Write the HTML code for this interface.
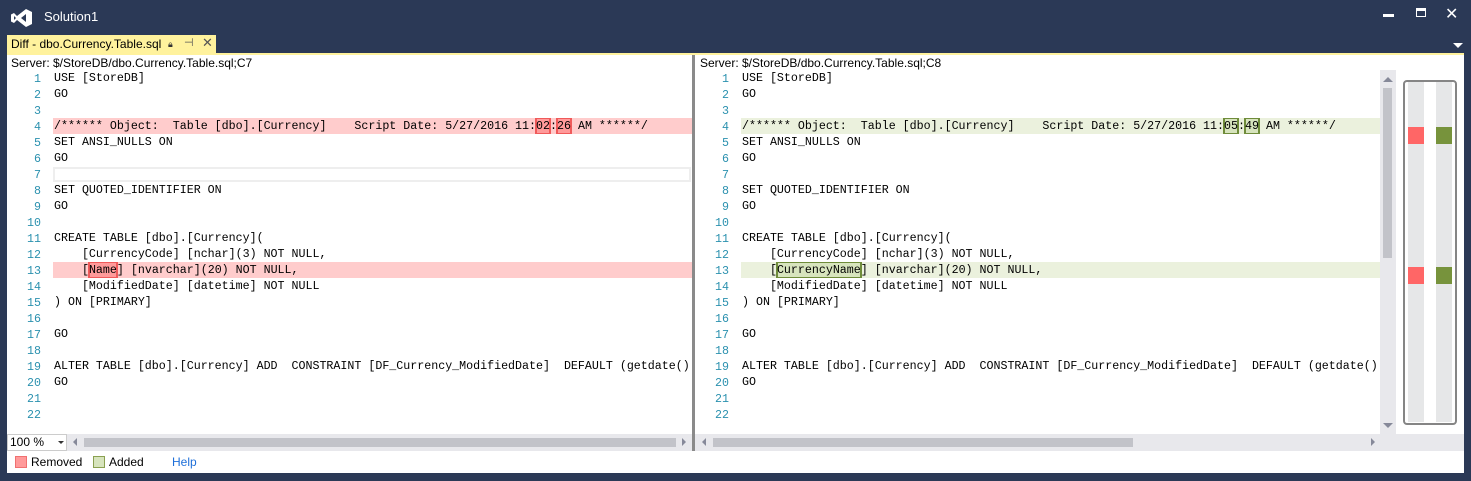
<!DOCTYPE html>
<html><head><meta charset="utf-8"><style>
*{margin:0;padding:0;box-sizing:border-box}
body{width:1471px;height:481px;background:#2b3956;position:relative;overflow:hidden;font-family:"Segoe UI","Liberation Sans",sans-serif}
.abs{position:absolute}
.code{font-family:"Liberation Mono",monospace;font-size:11.65px;color:#000;white-space:pre;line-height:16px}
.ln{position:absolute;width:36px;text-align:right;color:#2b91af;font-family:"Liberation Mono",monospace;font-size:11.65px;line-height:16px}
.rm{background:#ffcccc}
.ad{background:#ebf1dd}
.rb{display:inline-block;height:16px;vertical-align:top;box-shadow:0 0 0 1px #f05a5a,inset 0 0 0 1px #f05a5a;background:#ff9a9a}
.gb{display:inline-block;height:16px;vertical-align:top;box-shadow:0 0 0 1px #6f8c3a,inset 0 0 0 1px #6f8c3a;background:#d7e4bd}
.hdr{font-size:12px;color:#000}
</style></head><body>
<svg class="abs" style="left:11px;top:9px" width="22" height="18" viewBox="0 0 22 18"><path d="M15 0 L21 3 L21 15 L15 18 L6 11 L3 14 L0 12.5 L0 5.5 L3 4 L6 7 Z M15 5 L10 9 L15 13 Z M3 7 L3 11 L5 9 Z" fill="#fff" fill-rule="evenodd"/></svg>
<div class="abs" style="left:44px;top:9px;color:#fff;font-size:13px">Solution1</div>
<div class="abs" style="left:1383px;top:14px;width:11px;height:3px;background:#fff"></div>
<div class="abs" style="left:1416px;top:8px;width:10px;height:9px;border:1px solid #fff;border-top-width:3px"></div>
<div class="abs" style="left:1445px;top:4px;color:#fff;font-size:16px">✕</div>
<div class="abs" style="left:1453px;top:43px;width:0;height:0;border-left:5px solid transparent;border-right:5px solid transparent;border-top:5px solid #fff"></div>
<div class="abs" style="left:7px;top:35px;width:209px;height:19px;background:#fff29d"></div>
<div class="abs" style="left:11px;top:37px;font-size:12px;color:#000">Diff - dbo.Currency.Table.sql</div>
<div class="abs" style="left:168px;top:39px;font-size:9px;color:#333">🔒︎</div>
<div class="abs" style="left:184px;top:36px;font-size:11px;color:#555">⊣</div>
<div class="abs" style="left:202px;top:35px;font-size:13px;color:#555">✕</div>
<div class="abs" style="left:7px;top:53px;width:1457px;height:2px;background:#fff29d"></div>
<div class="abs" style="left:7px;top:55px;width:1457px;height:418px;background:#fff"></div>
<div class="abs hdr" style="left:11px;top:56px">Server: $/StoreDB/dbo.Currency.Table.sql;C7</div>
<div class="abs hdr" style="left:700px;top:56px">Server: $/StoreDB/dbo.Currency.Table.sql;C8</div>
<div class="abs" style="left:692px;top:55px;width:3px;height:396px;background:#8a8a8a"></div>
<div class="abs rm" style="left:53px;top:118px;width:639px;height:16px"></div>
<div class="abs" style="left:53px;top:167px;width:638px;height:15px;border:2px solid #eee"></div>
<div class="abs rm" style="left:53px;top:262px;width:639px;height:16px"></div>
<div class="abs ad" style="left:741px;top:118px;width:639px;height:16px"></div>
<div class="abs ad" style="left:741px;top:262px;width:639px;height:16px"></div>
<div id="L"></div><div id="R"></div>
<div class="abs" style="left:1380px;top:70px;width:16px;height:364px;background:#e8e8ec"></div>
<div class="abs" style="left:1383px;top:88px;width:9px;height:170px;background:#c2c3c9"></div>
<div class="abs" style="left:1383px;top:77px;border-left:5px solid transparent;border-right:5px solid transparent;border-bottom:5px solid #868999"></div>
<div class="abs" style="left:1383px;top:423px;border-left:5px solid transparent;border-right:5px solid transparent;border-top:5px solid #868999"></div>
<div class="abs" style="left:1408px;top:82px;width:16px;height:340px;background:#e6e7e8"></div>
<div class="abs" style="left:1436px;top:82px;width:16px;height:340px;background:#e6e7e8"></div>
<div class="abs" style="left:1408px;top:127px;width:16px;height:17px;background:#ff6666"></div>
<div class="abs" style="left:1436px;top:127px;width:16px;height:17px;background:#77933c"></div>
<div class="abs" style="left:1408px;top:267px;width:16px;height:17px;background:#ff6666"></div>
<div class="abs" style="left:1436px;top:267px;width:16px;height:17px;background:#77933c"></div>
<div class="abs" style="left:1403px;top:80px;width:54px;height:345px;border:2px solid #858585;border-radius:4px"></div>
<div class="abs" style="left:7px;top:434px;width:685px;height:17px;background:#e8e8ec"></div>
<div class="abs" style="left:695px;top:434px;width:769px;height:17px;background:#e8e8ec"></div>
<div class="abs" style="left:7px;top:434px;width:60px;height:17px;background:#fff;border:1px solid #ccc"></div>
<div class="abs" style="left:10px;top:435px;font-size:12px">100 %</div>
<div class="abs" style="left:58px;top:441px;border-left:3px solid transparent;border-right:3px solid transparent;border-top:3px solid #333"></div>
<div class="abs" style="left:73px;top:438px;border-top:4px solid transparent;border-bottom:4px solid transparent;border-right:4px solid #868999"></div>
<div class="abs" style="left:84px;top:438px;width:592px;height:9px;background:#c2c3c9"></div>
<div class="abs" style="left:682px;top:438px;border-top:4px solid transparent;border-bottom:4px solid transparent;border-left:4px solid #868999"></div>
<div class="abs" style="left:702px;top:438px;border-top:4px solid transparent;border-bottom:4px solid transparent;border-right:4px solid #868999"></div>
<div class="abs" style="left:713px;top:438px;width:420px;height:9px;background:#c2c3c9"></div>
<div class="abs" style="left:1371px;top:438px;border-top:4px solid transparent;border-bottom:4px solid transparent;border-left:4px solid #868999"></div>
<div class="abs" style="left:15px;top:456px;width:12px;height:12px;background:#ff9a9a;border:1px solid #f07070"></div>
<div class="abs" style="left:31px;top:455px;font-size:12px">Removed</div>
<div class="abs" style="left:93px;top:456px;width:12px;height:12px;background:#d7e4bd;border:1px solid #8aa050"></div>
<div class="abs" style="left:109px;top:455px;font-size:12px">Added</div>
<div class="abs" style="left:172px;top:455px;font-size:12px;color:#1e6fd9">Help</div>
<script>
var L=["USE [StoreDB]","GO","",'/****** Object:  Table [dbo].[Currency]    Script Date: 5/27/2016 11:<b class="rb">02</b>:<b class="rb">26</b> AM ******/',"SET ANSI_NULLS ON","GO","","SET QUOTED_IDENTIFIER ON","GO","","CREATE TABLE [dbo].[Currency](","    [CurrencyCode] [nchar](3) NOT NULL,",'    [<b class="rb">Name</b>] [nvarchar](20) NOT NULL,',"    [ModifiedDate] [datetime] NOT NULL",") ON [PRIMARY]","","GO","","ALTER TABLE [dbo].[Currency] ADD  CONSTRAINT [DF_Currency_ModifiedDate]  DEFAULT (getdate()","GO","",""];
var R=["USE [StoreDB]","GO","",'/****** Object:  Table [dbo].[Currency]    Script Date: 5/27/2016 11:<b class="gb">05</b>:<b class="gb">49</b> AM ******/',"SET ANSI_NULLS ON","GO","","SET QUOTED_IDENTIFIER ON","GO","","CREATE TABLE [dbo].[Currency](","    [CurrencyCode] [nchar](3) NOT NULL,",'    [<b class="gb">CurrencyName</b>] [nvarchar](20) NOT NULL,',"    [ModifiedDate] [datetime] NOT NULL",") ON [PRIMARY]","","GO","","ALTER TABLE [dbo].[Currency] ADD  CONSTRAINT [DF_Currency_ModifiedDate]  DEFAULT (getdate()","GO","",""];
function f(arr,id,nx,cx,w){var h="";for(var i=0;i<arr.length;i++){var y=70+16*i;
h+='<div class="ln" style="left:'+nx+'px;top:'+(y+2)+'px">'+(i+1)+'</div>';
h+='<div class="abs code" style="left:'+cx+'px;top:'+y+'px;height:16px;width:'+w+'px;overflow:hidden;padding-top:2px;line-height:14px">'+arr[i].replace(/<b /g,'<span ').replace(/<\/b>/g,'</span>')+'</div>';}
document.getElementById(id).innerHTML=h;}
f(L,"L",5,54,638);f(R,"R",693,742,638);
</script>
<style>.code span{font-weight:normal;height:16px;margin-top:-2px;padding-top:2px;line-height:14px}</style>
</body></html>
